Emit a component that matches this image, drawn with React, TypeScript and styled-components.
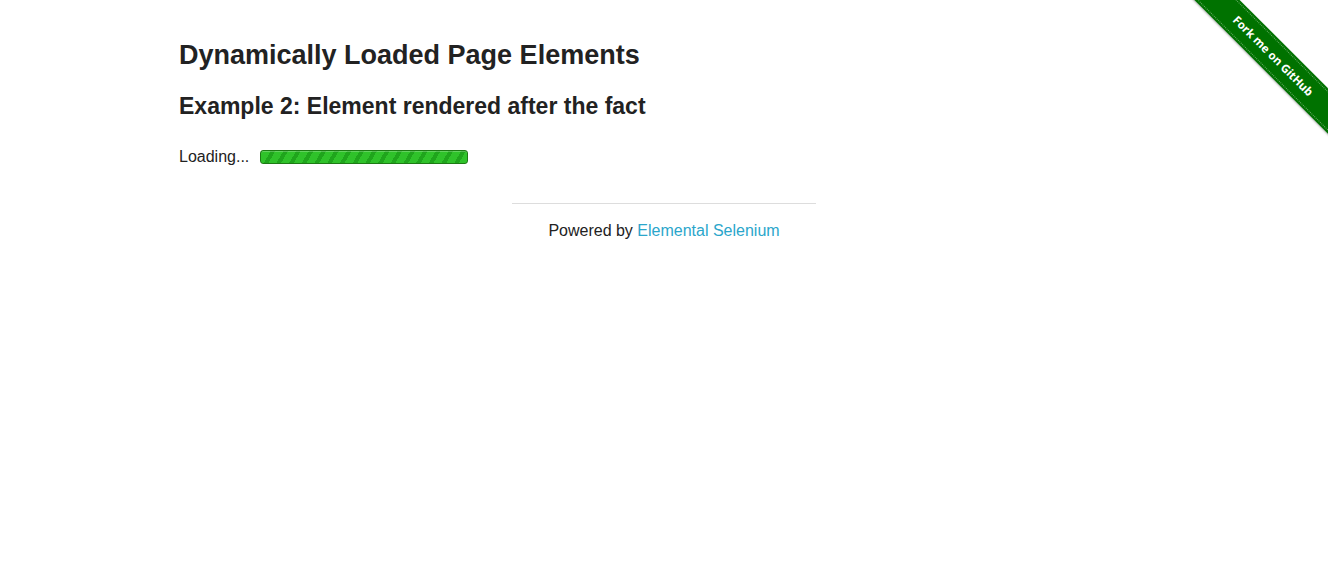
import React from "react";
import styled, { createGlobalStyle } from "styled-components";

const Global = createGlobalStyle`
  html, body { margin: 0; padding: 0; background: #fff; }
  body {
    font-family: "Liberation Sans", Arial, Helvetica, sans-serif;
    color: #222;
    font-size: 16px;
    line-height: 1.5;
  }
`;

const Row = styled.div`
  max-width: 1000px;
  margin: 0 auto;
`;

const Content = styled.div`
  padding: 36px 15px 0;
`;

const Title = styled.h3`
  margin: 0;
  font-size: 27px;
  line-height: 38px;
  font-weight: bold;
  color: #222;
`;

const Subtitle = styled.h4`
  margin: 16px 0 0;
  font-size: 23px;
  line-height: 32px;
  font-weight: bold;
  color: #222;
`;

const Loading = styled.div`
  margin-top: 23px;
  display: flex;
  align-items: center;
  height: 24px;
  font-size: 16px;
`;

const Bar = styled.div`
  margin-left: 11px;
  width: 206px;
  height: 12px;
  border: 1px solid #1d7a14;
  border-radius: 3px;
  background: repeating-linear-gradient(
    -60deg,
    #2fc22a 0px,
    #2fc22a 7px,
    #1fa51c 7px,
    #1fa51c 11px
  );
  box-shadow: inset 0 1px 0 rgba(255, 255, 255, 0.25);
`;

const Footer = styled.div`
  width: 304px;
  margin: 34px auto 0;
`;

const Rule = styled.hr`
  margin: 0;
  border: 0;
  border-top: 1px solid #ddd;
  height: 0;
`;

const Powered = styled.div`
  margin-top: 15px;
  text-align: center;
  line-height: 24px;
`;

const Link = styled.a`
  color: #2ba6cb;
  text-decoration: none;
`;

const RibbonBox = styled.div`
  position: absolute;
  top: 0;
  right: 0;
  width: 149px;
  height: 149px;
  overflow: hidden;
  pointer-events: none;
`;

const Ribbon = styled.a`
  position: absolute;
  left: -31px;
  top: 40px;
  width: 250px;
  height: 32px;
  transform: rotate(45deg);
  background: #007200;
  color: #fff;
  font-family: "Noto Sans", "DejaVu Sans", sans-serif;
  font-weight: bold;
  font-size: 11.5px;
  line-height: 32px;
  text-align: center;
  text-decoration: none;
  box-shadow: 0 1px 2px rgba(0, 0, 0, 0.3);
  box-sizing: border-box;
  &::before,
  &::after {
    content: "";
    position: absolute;
    left: 0;
    right: 0;
    height: 0;
    border-top: 1px dotted rgba(255, 255, 255, 0.4);
  }
  &::before { top: 2px; }
  &::after { bottom: 2px; }
`;

export default function App() {
  return (
    <>
      <Global />
      <Row>
        <Content>
          <Title>Dynamically Loaded Page Elements</Title>
          <Subtitle>Example 2: Element rendered after the fact</Subtitle>
          <Loading>
            Loading...
            <Bar />
          </Loading>
        </Content>
      </Row>
      <Footer>
        <Rule />
        <Powered>
          Powered by <Link href="#">Elemental Selenium</Link>
        </Powered>
      </Footer>
      <RibbonBox>
        <Ribbon href="#">Fork me on GitHub</Ribbon>
      </RibbonBox>
    </>
  );
}
